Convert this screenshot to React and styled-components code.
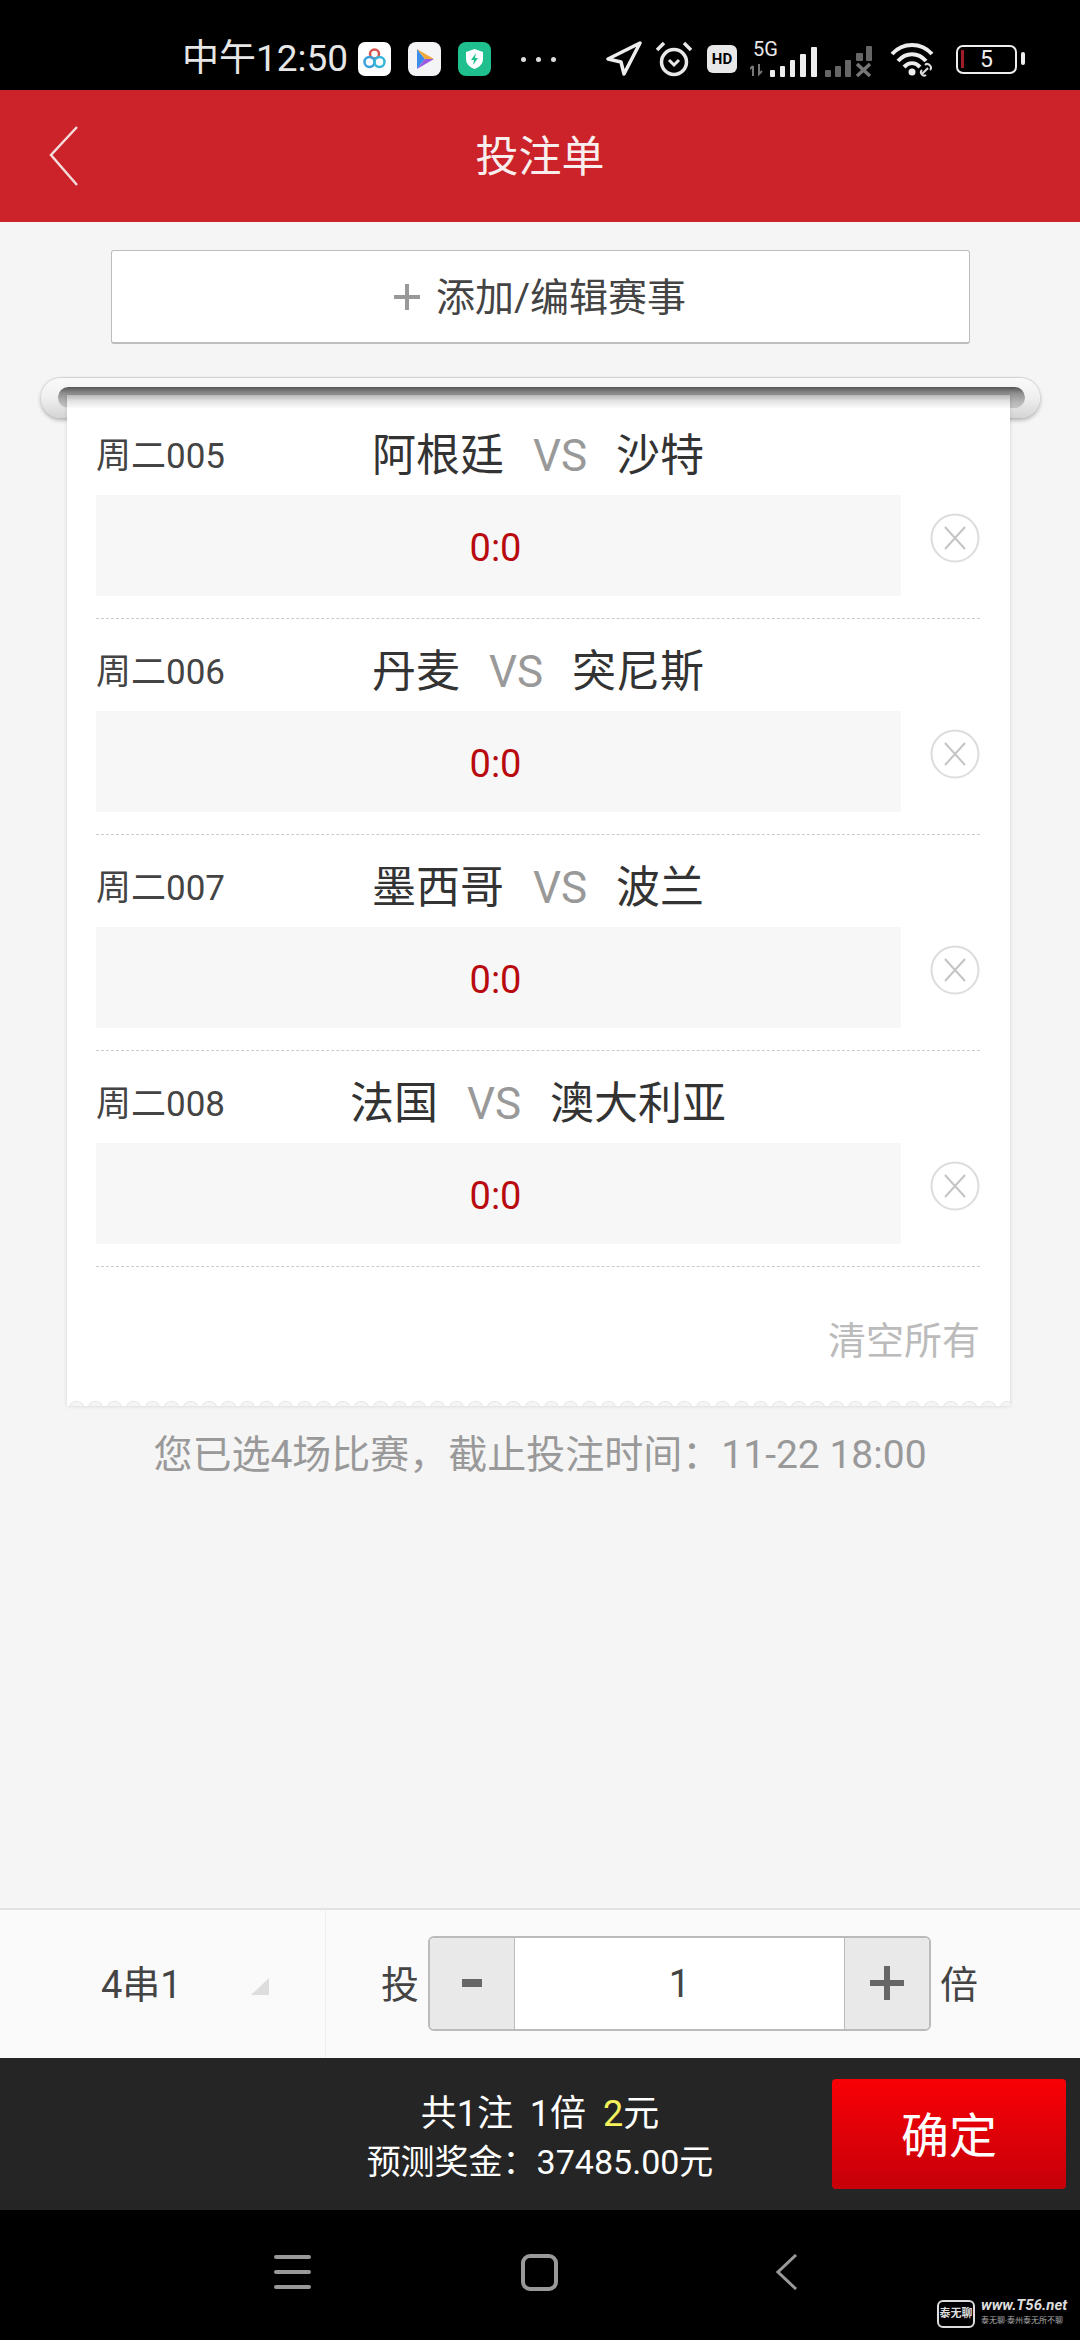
import React from 'react';
import styled, { createGlobalStyle } from 'styled-components';

const matches = [
  { id: '周二005', home: '阿根廷', away: '沙特' },
  { id: '周二006', home: '丹麦', away: '突尼斯' },
  { id: '周二007', home: '墨西哥', away: '波兰' },
  { id: '周二008', home: '法国', away: '澳大利亚' },
];

function App() {
  return (
    <Page>
      <GlobalStyle />
      <StatusBar>
        <Time>中午12:50</Time>
        <AppIcon $gap={10} viewBox="0 0 33 34">
          <rect width="33" height="34" rx="7" fill="#fff" />
          <circle cx="16.5" cy="12" r="4.5" fill="none" stroke="#d8524e" strokeWidth="2.5" />
          <circle cx="11.5" cy="20" r="5" fill="none" stroke="#3aa0dc" strokeWidth="2.5" />
          <circle cx="21.5" cy="20" r="5" fill="none" stroke="#35b6d8" strokeWidth="2.5" />
        </AppIcon>
        <AppIcon $gap={17} viewBox="0 0 33 34">
          <rect width="33" height="34" rx="8" fill="#f4f4f6" />
          <path d="M9 7 L17 17 L9 27 Z" fill="#3d8ee8" />
          <path d="M9 7 L26 17 L17 17 Z" fill="#f2a93b" />
          <path d="M9 27 L26 17 L17 17 Z" fill="#9a5be0" />
        </AppIcon>
        <AppIcon $gap={17} viewBox="0 0 33 34">
          <rect width="33" height="34" rx="8" fill="#1fc08e" />
          <path d="M16.5 7 L25 10 V17 C25 22 21 25.500 16.500 27 C12 25.500 8 22 8 17 V10 Z" fill="#fff" />
          <path d="M18 11 L13 18 H16 L15 23 L20 16 H17 Z" fill="#1fc08e" />
        </AppIcon>
        <Dots>
          <i />
          <i />
          <i />
        </Dots>
        <StatusIcon $gap={49} width="37" height="36" viewBox="0 0 37 36">
          <path d="M35 2 L3 18 L16 21 L19 33 Z" fill="none" stroke="#eee" strokeWidth="3.5" strokeLinejoin="round" />
        </StatusIcon>
        <StatusIcon $gap={13} width="38" height="36" viewBox="0 0 38 36">
          <circle cx="19" cy="21" r="12.500" fill="none" stroke="#e8e8e8" strokeWidth="3.500" />
          <path d="M14 19 L19 24 L24 19" fill="none" stroke="#e8e8e8" strokeWidth="3" />
          <path d="M2 9 L9 2 M36 9 L29 2" stroke="#e8e8e8" strokeWidth="3.500" />
        </StatusIcon>
        <HdBadge>HD</HdBadge>
        <StatusIcon $gap={13} width="67" height="48" viewBox="0 -6 67 48">
          <text x="3" y="15" fill="#e8e8e8" fontSize="20" fontFamily="Roboto, sans-serif">5G</text>
          <path d="M3 25 V35 M0 28 L3 25 M9 23 V33 L12 30" stroke="#777" strokeWidth="2" fill="none" />
          <rect x="20" y="29" width="5" height="7" rx="1" fill="#eee" />
          <rect x="30" y="25" width="5" height="11" rx="1" fill="#eee" />
          <rect x="40" y="19" width="5" height="17" rx="1" fill="#eee" />
          <rect x="50" y="13" width="6" height="23" rx="1" fill="#eee" />
          <rect x="61" y="6" width="6" height="30" rx="1" fill="#eee" />
        </StatusIcon>
        <StatusIcon $gap={8} width="47" height="36" viewBox="0 0 47 36">
          <rect x="0" y="29" width="6" height="7" rx="1" fill="#666" />
          <rect x="10" y="25" width="6" height="11" rx="1" fill="#666" />
          <rect x="20" y="19" width="6" height="17" rx="1" fill="#666" />
          <rect x="31" y="12" width="7" height="8" rx="1" fill="#666" />
          <rect x="41" y="5" width="6" height="15" rx="1" fill="#666" />
          <path d="M32 23 L45 35 M45 23 L32 35" stroke="#777" strokeWidth="3.500" />
        </StatusIcon>
        <StatusIcon $gap={18} width="47" height="36" viewBox="0 0 47 36">
          <path d="M2 13 C13 1 31 1 42 13" fill="none" stroke="#eee" strokeWidth="4" />
          <path d="M8 20 C16 11 28 11 36 20" fill="none" stroke="#eee" strokeWidth="4" />
          <path d="M14 26 C19 21 25 21 30 26" fill="none" stroke="#eee" strokeWidth="4" />
          <circle cx="22" cy="31" r="3.500" fill="#eee" />
          <path d="M32 33 L38 27 M36 34 C33 36 29 32 32 29 M35 24 C38 21 43 26 40 29" fill="none" stroke="#ddd" strokeWidth="2" />
        </StatusIcon>
        <Battery>
          <BatteryLevel />
          5
        </Battery>
      </StatusBar>

      <Header>
        <BackIcon width="30" height="60" viewBox="0 0 30 60">
          <path d="M28 1 L2 29 L28 59" fill="none" stroke="#f4dcdc" strokeWidth="2.500" />
        </BackIcon>
        投注单
      </Header>

      <Main>
        <AddButton>
          <PlusMark />
          添加/编辑赛事
        </AddButton>

        <Rod>
          <RodSlot />
        </Rod>
        <Paper>
          {matches.map((match) => (
            <MatchRow key={match.id}>
              <MatchHead>
                <MatchId>{match.id}</MatchId>
                <Teams>
                  <span>{match.home}</span>
                  <Versus>VS</Versus>
                  <span>{match.away}</span>
                </Teams>
              </MatchHead>
              <MatchBody>
                <ScoreCell>0:0</ScoreCell>
                <RemoveIcon width="50" height="50" viewBox="0 0 50 50">
                  <circle cx="25" cy="25" r="23.500" fill="none" stroke="#ddd" strokeWidth="2" />
                  <path d="M15 14 L35 36 M35 14 L15 36" stroke="#c4c4c4" strokeWidth="2" />
                </RemoveIcon>
              </MatchBody>
            </MatchRow>
          ))}
          <ClearAll>清空所有</ClearAll>
          <PaperEdge />
        </Paper>
        <Info>您已选4场比赛，截止投注时间：11-22 18:00</Info>
      </Main>

      <BetBar>
        <PassSelect>
          4串1
          <SelectCorner />
        </PassSelect>
        <Multiple>
          <Unit>投</Unit>
          <Stepper>
            <StepButton>
              <MinusMark />
            </StepButton>
            <StepValue>1</StepValue>
            <StepButton>
              <StepPlus />
            </StepButton>
          </Stepper>
          <Unit>倍</Unit>
        </Multiple>
      </BetBar>

      <TotalBar>
        <TotalText>
          <TotalLine>
            共1注 1倍 <Amount>2</Amount>元
          </TotalLine>
          <PrizeLine>预测奖金：37485.00元</PrizeLine>
        </TotalText>
        <ConfirmButton>确定</ConfirmButton>
      </TotalBar>

      <NavBar>
        <MenuIcon>
          <i />
          <i />
          <i />
        </MenuIcon>
        <HomeIcon />
        <svg width="22" height="36" viewBox="0 0 22 36">
          <path d="M20 1 L2 18 L20 35" fill="none" stroke="#999" strokeWidth="3" />
        </svg>
        <Watermark>
          <WatermarkLogo>泰无聊</WatermarkLogo>
          <WatermarkText>
            <WatermarkUrl>www.T56.net</WatermarkUrl>
            <WatermarkSlogan>泰无聊·泰州泰无所不聊</WatermarkSlogan>
          </WatermarkText>
        </Watermark>
      </NavBar>
    </Page>
  );
}

export default App;

// Styled Components

const GlobalStyle = createGlobalStyle`
  html, body {
    margin: 0;
    padding: 0;
    background: #000;
  }
`;

const Page = styled.div`
  width: 1080px;
  height: 2340px;
  display: flex;
  flex-direction: column;
  overflow: hidden;
  background: #f5f5f5;
  font-family: Roboto, "Noto Sans CJK SC", sans-serif;
  color: #333;
`;

const StatusBar = styled.div`
  height: 62px;
  flex: none;
  padding: 28px 0 0 182px;
  display: flex;
  align-items: center;
  background: #000;
`;

const Time = styled.div`
  width: 166px;
  font-size: 37px;
  line-height: 40px;
  white-space: nowrap;
  color: #e6e6e6;
`;

const AppIcon = styled.svg`
  width: 33px;
  height: 34px;
  margin-left: ${(props) => props.$gap}px;
`;

const StatusIcon = styled.svg`
  flex: none;
  margin-left: ${(props) => props.$gap}px;
`;

const Dots = styled.div`
  margin-left: 30px;
  width: 35px;
  display: flex;
  justify-content: space-between;

  i {
    width: 5px;
    height: 5px;
    border-radius: 50%;
    background: #ddd;
  }
`;

const HdBadge = styled.div`
  width: 30px;
  height: 28px;
  margin-left: 14px;
  border-radius: 6px;
  background: #e8e8e8;
  color: #000;
  font-size: 15px;
  font-weight: 700;
  line-height: 28px;
  text-align: center;
`;

const Battery = styled.div`
  position: relative;
  width: 61px;
  height: 29px;
  margin-left: 19px;
  box-sizing: border-box;
  border: 2.5px solid #eee;
  border-radius: 7px;
  color: #eee;
  font-size: 23px;
  line-height: 25px;
  text-align: center;

  &::after {
    content: '';
    position: absolute;
    top: 5px;
    right: -10px;
    width: 4px;
    height: 13px;
    border-radius: 2px;
    background: #eee;
  }
`;

const BatteryLevel = styled.span`
  position: absolute;
  top: 3px;
  left: 3px;
  width: 3px;
  height: 18px;
  background: #a01c28;
`;

const Header = styled.div`
  position: relative;
  height: 132px;
  flex: none;
  box-sizing: border-box;
  padding-bottom: 7px;
  display: flex;
  align-items: center;
  justify-content: center;
  background: #cc2229;
  color: #f8eeee;
  font-size: 43px;
`;

const BackIcon = styled.svg`
  position: absolute;
  left: 49px;
  top: 36px;
`;

const Main = styled.div`
  flex: 1;
  padding-top: 28px;
  display: flex;
  flex-direction: column;
  align-items: center;
`;

const AddButton = styled.div`
  width: 859px;
  height: 94px;
  box-sizing: border-box;
  padding-bottom: 5px;
  flex: none;
  display: flex;
  align-items: center;
  justify-content: center;
  gap: 16px;
  background: #fff;
  border: 1px solid #bdbdbd;
  border-bottom-width: 2px;
  border-radius: 3px;
  color: #444;
  font-size: 39px;
`;

const PlusMark = styled.span`
  width: 26px;
  height: 26px;
  margin-top: 5px;
  background:
    linear-gradient(#999, #999) center / 100% 4px no-repeat,
    linear-gradient(#999, #999) center / 4px 100% no-repeat;
`;

const Rod = styled.div`
  width: 999px;
  height: 40px;
  margin-top: 34px;
  padding: 9px 15px 0 17px;
  box-sizing: border-box;
  flex: none;
  border-radius: 20px;
  background: linear-gradient(#fafafa, #efefef 50%, #d4d4d4);
  box-shadow: 0 2px 4px rgba(0, 0, 0, 0.3), 0 -1px 1px rgba(0, 0, 0, 0.12);
`;

const RodSlot = styled.div`
  height: 21px;
  border-radius: 11px;
  background: linear-gradient(#555, #8f8f8f 30%, #b4b4b4 70%, #c4c4c4);
`;

const Paper = styled.div`
  position: relative;
  width: 943px;
  height: 1011px;
  margin-top: -23px;
  margin-right: 3px;
  padding: 8px 30px 0 29px;
  box-sizing: border-box;
  flex: none;
  background: linear-gradient(#b8b8b8, #e2e2e2 6px, #fff 14px);
  box-shadow: 0 0 4px rgba(0, 0, 0, 0.14);
`;

const MatchRow = styled.div`
  height: 216px;
  box-sizing: border-box;
  padding-top: 17px;
  border-bottom: 1px dashed #ccc;
`;

const MatchHead = styled.div`
  height: 50px;
  margin-bottom: 25px;
  display: grid;
  grid-template-columns: 1fr auto 1fr;
  align-items: center;
`;

const MatchId = styled.div`
  font-size: 35px;
  color: #444;
`;

const Teams = styled.div`
  display: flex;
  align-items: baseline;
  gap: 29px;
  font-size: 44px;
  color: #333;
`;

const Versus = styled.span`
  color: #999;
`;

const MatchBody = styled.div`
  display: flex;
  align-items: flex-start;
  justify-content: space-between;
`;

const ScoreCell = styled.div`
  width: 805px;
  height: 101px;
  padding: 4px 6px 0 0;
  box-sizing: border-box;
  display: flex;
  align-items: center;
  justify-content: center;
  background: #f7f7f7;
  color: #b8090f;
  font-size: 38px;
`;

const RemoveIcon = styled.svg`
  flex: none;
  margin-top: 18px;
`;

const ClearAll = styled.div`
  margin-top: 49px;
  text-align: right;
  color: #bbb;
  font-size: 38px;
  line-height: 50px;
`;

const PaperEdge = styled.div`
  position: absolute;
  left: 0;
  right: 0;
  bottom: 0;
  height: 8px;
  background: radial-gradient(circle at 9.500px 11px, #f5f5f5 7px, #e4e4e4 7.500px, transparent 8.500px) 0 0 / 19px 8px repeat-x;
`;

const Info = styled.div`
  margin-top: 24px;
  color: #999;
  font-size: 39px;
  line-height: 50px;
  white-space: nowrap;
`;

const BetBar = styled.div`
  height: 150px;
  flex: none;
  box-sizing: border-box;
  display: flex;
  border-top: 2px solid #e2e2e2;
  background: #fafafa;
  color: #444;
  font-size: 38px;
`;

const PassSelect = styled.div`
  position: relative;
  width: 326px;
  box-sizing: border-box;
  padding: 0 0 6px 101px;
  display: flex;
  align-items: center;
  border-right: 1px solid #efefef;
`;

const SelectCorner = styled.span`
  position: absolute;
  left: 251px;
  top: 68px;
  width: 18px;
  height: 17px;
  background: #ddd;
  clip-path: polygon(100% 0, 100% 100%, 0 100%);
`;

const Multiple = styled.div`
  flex: 1;
  padding-left: 55px;
  display: flex;
  align-items: center;
  gap: 9px;
  margin-top: -2px;
`;

const Unit = styled.span`
  margin-bottom: 4px;
`;

const Stepper = styled.div`
  width: 503px;
  height: 95px;
  box-sizing: border-box;
  display: flex;
  border: 2px solid #bbb;
  border-radius: 6px;
  overflow: hidden;
`;

const StepButton = styled.div`
  width: 84px;
  flex: none;
  display: flex;
  align-items: center;
  justify-content: center;
  background: #e9e9e9;
`;

const StepValue = styled.div`
  flex: 1;
  padding-top: 2px;
  display: flex;
  align-items: center;
  justify-content: center;
  background: #fff;
  border-left: 1px solid #bbb;
  border-right: 1px solid #bbb;
`;

const MinusMark = styled.span`
  width: 20px;
  height: 8px;
  background: #666;
`;

const StepPlus = styled.span`
  width: 34px;
  height: 34px;
  background:
    linear-gradient(#666, #666) center / 100% 6px no-repeat,
    linear-gradient(#666, #666) center / 6px 100% no-repeat;
`;

const TotalBar = styled.div`
  position: relative;
  height: 152px;
  flex: none;
  display: flex;
  align-items: center;
  justify-content: flex-end;
  padding-right: 14px;
  background: #252525;
`;

const TotalText = styled.div`
  position: absolute;
  left: 0;
  right: 0;
  top: 31px;
  text-align: center;
  color: #fff;
`;

const TotalLine = styled.div`
  font-size: 36px;
  line-height: 50px;
  word-spacing: 8px;
`;

const PrizeLine = styled.div`
  font-size: 34px;
  line-height: 46px;
`;

const Amount = styled.span`
  color: #f6f25c;
`;

const ConfirmButton = styled.div`
  width: 234px;
  height: 110px;
  padding-bottom: 4px;
  box-sizing: border-box;
  display: flex;
  align-items: center;
  justify-content: center;
  border-radius: 4px;
  background: linear-gradient(#f80006, #c60009);
  color: #fff;
  font-size: 48px;
`;

const NavBar = styled.div`
  position: relative;
  height: 130px;
  flex: none;
  box-sizing: border-box;
  padding: 0 0 6px 274px;
  display: flex;
  align-items: center;
  gap: 210px;
  background: #000;
`;

const MenuIcon = styled.div`
  width: 37px;
  height: 34px;
  display: flex;
  flex-direction: column;
  justify-content: space-between;

  i {
    height: 4px;
    border-radius: 2px;
    background: #999;
  }
`;

const HomeIcon = styled.div`
  width: 37px;
  height: 37px;
  margin-right: 8px;
  box-sizing: border-box;
  border: 4px solid #999;
  border-radius: 9px;
`;

const Watermark = styled.div`
  position: absolute;
  left: 937px;
  top: 88px;
  display: flex;
  gap: 6px;
`;

const WatermarkLogo = styled.div`
  width: 38px;
  height: 28px;
  margin-top: 2px;
  box-sizing: border-box;
  border: 2px solid #ddd;
  border-radius: 6px;
  color: #ddd;
  font-size: 11px;
  font-weight: 700;
  line-height: 24px;
  text-align: center;
  white-space: nowrap;
`;

const WatermarkText = styled.div`
  display: flex;
  flex-direction: column;
  gap: 3px;
`;

const WatermarkUrl = styled.div`
  color: #ddd;
  font-size: 15px;
  font-style: italic;
  font-weight: 700;
  line-height: 15px;
  white-space: nowrap;
`;

const WatermarkSlogan = styled.div`
  color: #aaa;
  font-size: 8px;
  line-height: 10px;
  white-space: nowrap;
`;
